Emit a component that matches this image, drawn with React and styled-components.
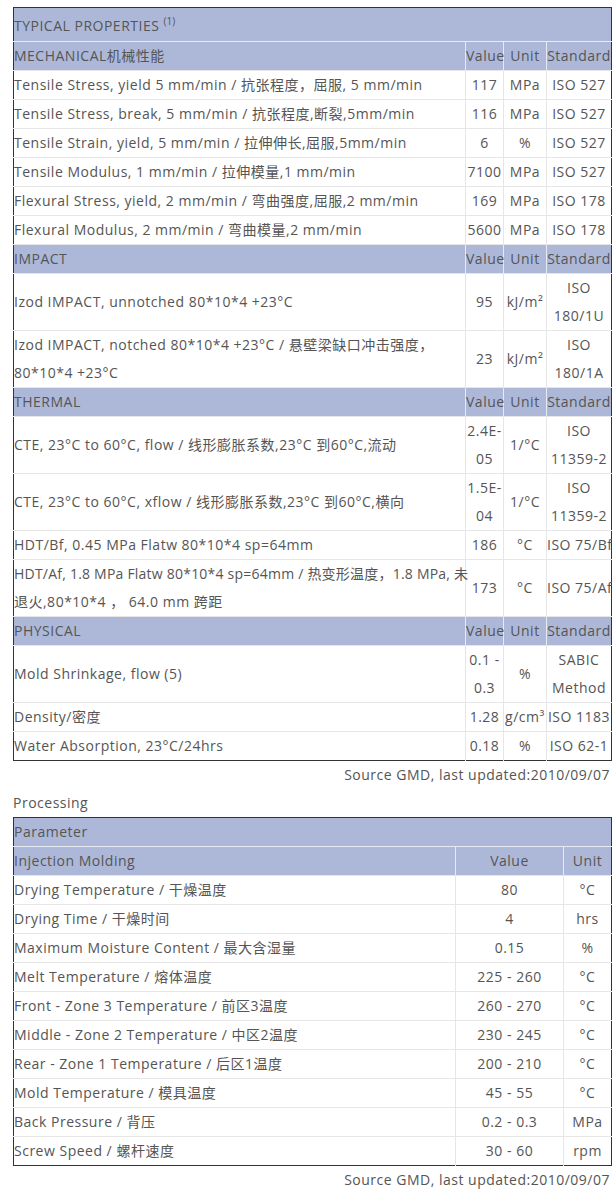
import React from 'react';
import styled, { createGlobalStyle } from 'styled-components';

const GlobalStyle = createGlobalStyle`
    body {
        margin: 0;
        background: #fff;
        font-family: "Open Sans", "Noto Sans CJK SC", sans-serif;
        font-size: 14px;
        letter-spacing: 0.5px;
        color: #555;
    }
`;

//=-=-=-=-=-=-=-=-=-=-=-= STYLES =-=-=-=-=-=-=-=-=-=-=-=
const Page = styled.div`
    width: 598px;
    padding: 7px 1px 0 13px;
`;

const Table = styled.table`
    width: 598px;
    border-collapse: collapse;
    table-layout: fixed;
    border: 1px solid #333;
`;

const TitleCell = styled.td`
    background: #adb8d9;
    height: ${p => (p.$short ? '28px' : '29px')};
    padding: ${p => (p.$short ? '0' : '4px 0 0')};
    line-height: 28px;
    vertical-align: top;
    border-bottom: 1px solid #e6eaf4;
    sup {
        font-size: 10px;
        line-height: 0;
        letter-spacing: 0;
    }
`;

const HeadCell = styled.td`
    background: #adb8d9;
    height: 28px;
    padding: 0;
    line-height: 28px;
    text-align: ${p => (p.$left ? 'left' : 'center')};
    border-top: 1px solid #e6e6e6;
    border-left: ${p => (p.$left ? 'none' : '1px solid #e6eaf4')};
    white-space: nowrap;
    overflow: visible;
`;

const Cell = styled.td`
    height: ${p => (p.$tall ? '56px' : '28px')};
    padding: 0;
    line-height: 28px;
    vertical-align: middle;
    text-align: ${p => (p.$left ? 'left' : 'center')};
    border-top: 1px solid #e6e6e6;
    border-left: ${p => (p.$left ? 'none' : '1px solid #e6e6e6')};
    white-space: ${p => (p.$wrap ? 'normal' : 'nowrap')};
`;

const Line = styled.span`
    display: block;
    height: 28px;
    white-space: nowrap;
    letter-spacing: ${p => p.$spacing || '0.5px'};
`;

const Source = styled.div`
    text-align: right;
    line-height: 28px;
    padding-right: 1px;
`;

const Caption = styled.div`
    line-height: 28px;
`;

// name, value, unit, standard, two-line row, value/standard may wrap
const properties = [
    {
        group: 'MECHANICAL机械性能',
        rows: [
            ['Tensile Stress, yield 5 mm/min / 抗张程度，屈服, 5 mm/min', '117', 'MPa', 'ISO 527'],
            ['Tensile Stress, break, 5 mm/min / 抗张程度,断裂,5mm/min', '116', 'MPa', 'ISO 527'],
            ['Tensile Strain, yield, 5 mm/min / 拉伸伸长,屈服,5mm/min', '6', '%', 'ISO 527'],
            ['Tensile Modulus, 1 mm/min / 拉伸模量,1 mm/min', '7100', 'MPa', 'ISO 527'],
            ['Flexural Stress, yield, 2 mm/min / 弯曲强度,屈服,2 mm/min', '169', 'MPa', 'ISO 178'],
            ['Flexural Modulus, 2 mm/min / 弯曲模量,2 mm/min', '5600', 'MPa', 'ISO 178'],
        ],
    },
    {
        group: 'IMPACT',
        rows: [
            ['Izod IMPACT, unnotched 80*10*4 +23°C', '95', 'kJ/m²', 'ISO 180/1U', true, true],
            [['Izod IMPACT, notched 80*10*4 +23°C / 悬壁梁缺口冲击强度，', '80*10*4 +23°C'], '23', 'kJ/m²', 'ISO 180/1A', true, true],
        ],
    },
    {
        group: 'THERMAL',
        rows: [
            ['CTE, 23°C to 60°C, flow / 线形膨胀系数,23°C 到60°C,流动', '2.4E-05', '1/°C', 'ISO 11359-2', true, true],
            ['CTE, 23°C to 60°C, xflow / 线形膨胀系数,23°C 到60°C,横向', '1.5E-04', '1/°C', 'ISO 11359-2', true, true],
            ['HDT/Bf, 0.45 MPa Flatw 80*10*4 sp=64mm', '186', '°C', 'ISO 75/Bf'],
            [['HDT/Af, 1.8 MPa Flatw 80*10*4 sp=64mm / 热变形温度，1.8 MPa, 未', '退火,80*10*4 ， 64.0 mm 跨距'], '173', '°C', 'ISO 75/Af', true, false, '0.22px'],
        ],
    },
    {
        group: 'PHYSICAL',
        rows: [
            ['Mold Shrinkage, flow (5)', '0.1 - 0.3', '%', 'SABIC Method', true, true],
            ['Density/密度', '1.28', 'g/cm³', 'ISO 1183'],
            ['Water Absorption, 23°C/24hrs', '0.18', '%', 'ISO 62-1'],
        ],
    },
];

const processing = [
    ['Drying Temperature / 干燥温度', '80', '°C'],
    ['Drying Time / 干燥时间', '4', 'hrs'],
    ['Maximum Moisture Content / 最大含湿量', '0.15', '%'],
    ['Melt Temperature / 熔体温度', '225 - 260', '°C'],
    ['Front - Zone 3 Temperature / 前区3温度', '260 - 270', '°C'],
    ['Middle - Zone 2 Temperature / 中区2温度', '230 - 245', '°C'],
    ['Rear - Zone 1 Temperature / 后区1温度', '200 - 210', '°C'],
    ['Mold Temperature / 模具温度', '45 - 55', '°C'],
    ['Back Pressure / 背压', '0.2 - 0.3', 'MPa'],
    ['Screw Speed / 螺杆速度', '30 - 60', 'rpm'],
];

function Name({ text, spacing }) {
    if (!Array.isArray(text)) return text;
    return (
        <>
            <Line $spacing={spacing}>{text[0]}</Line>
            <Line>{text[1]}</Line>
        </>
    );
}

function App() {
    return (
        <Page>
            <GlobalStyle />
            <Table>
                <colgroup>
                    <col style={{ width: 452 }} />
                    <col style={{ width: 38 }} />
                    <col style={{ width: 43 }} />
                    <col style={{ width: 65 }} />
                </colgroup>
                <tbody>
                    <tr>
                        <TitleCell colSpan={4}>TYPICAL PROPERTIES <sup>(1)</sup></TitleCell>
                    </tr>
                    {properties.map(section => (
                        <React.Fragment key={section.group}>
                            <tr>
                                <HeadCell $left>{section.group}</HeadCell>
                                <HeadCell>Value</HeadCell>
                                <HeadCell>Unit</HeadCell>
                                <HeadCell>Standard</HeadCell>
                            </tr>
                            {section.rows.map(([name, value, unit, standard, tall, wrap, spacing]) => (
                                <tr key={String(name)}>
                                    <Cell $left $tall={tall} $wrap={tall}><Name text={name} spacing={spacing} /></Cell>
                                    <Cell $tall={tall} $wrap={wrap}>{value}</Cell>
                                    <Cell>{unit}</Cell>
                                    <Cell $tall={tall} $wrap={wrap}>{standard}</Cell>
                                </tr>
                            ))}
                        </React.Fragment>
                    ))}
                </tbody>
            </Table>
            <Source>Source GMD, last updated:2010/09/07</Source>
            <Caption>Processing</Caption>
            <Table>
                <colgroup>
                    <col style={{ width: 442 }} />
                    <col style={{ width: 108 }} />
                    <col style={{ width: 48 }} />
                </colgroup>
                <tbody>
                    <tr>
                        <TitleCell colSpan={3} $short>Parameter</TitleCell>
                    </tr>
                    <tr>
                        <HeadCell $left>Injection Molding</HeadCell>
                        <HeadCell>Value</HeadCell>
                        <HeadCell>Unit</HeadCell>
                    </tr>
                    {processing.map(([name, value, unit]) => (
                        <tr key={name}>
                            <Cell $left>{name}</Cell>
                            <Cell>{value}</Cell>
                            <Cell>{unit}</Cell>
                        </tr>
                    ))}
                </tbody>
            </Table>
            <Source>Source GMD, last updated:2010/09/07</Source>
        </Page>
    );
}

export default App;
